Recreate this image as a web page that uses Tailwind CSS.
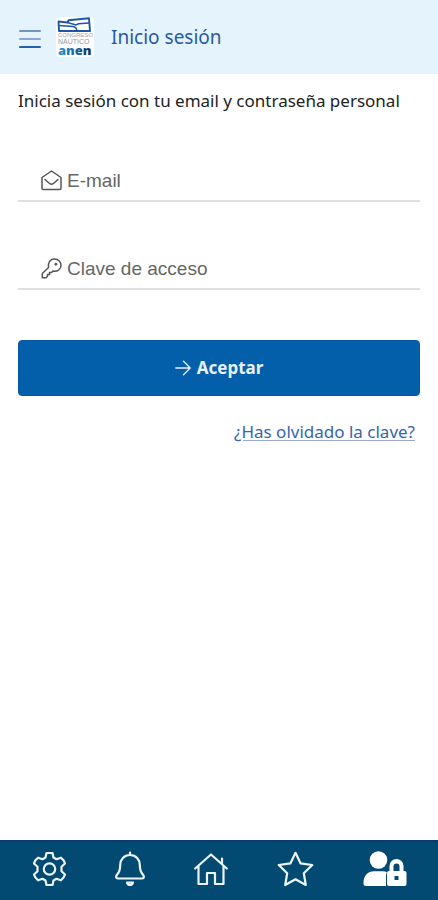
<!DOCTYPE html>
<html lang="es">
<head>
<meta charset="utf-8">
<meta name="viewport" content="width=device-width, initial-scale=1">
<title>Inicio sesión</title>
<script src="https://cdn.jsdelivr.net/npm/@tailwindcss/browser@4"></script>
</head>
<body class="flex min-h-screen flex-col bg-white font-['Noto_Sans','Open_Sans',sans-serif] text-[#222]">
  <header class="flex h-[74px] items-center bg-[#e5f4fc] pl-[18px]">
    <button type="button" aria-label="Menú" class="mt-1 flex h-6 w-6 flex-col justify-center gap-1.5 px-px">
      <span class="h-0.5 w-full rounded-full bg-[#7193c7]"></span>
      <span class="h-0.5 w-full rounded-full bg-[#8da6d0]"></span>
      <span class="h-0.5 w-full rounded-full bg-[#2460ad]"></span>
    </button>
    <svg class="ml-3.5 h-10 w-[38px]" viewBox="0 0 38 40" role="img" aria-label="Congreso Náutico ANEN">
      <defs>
        <linearGradient id="anen" x1="0" x2="1" y1="0" y2="0">
          <stop offset="0" stop-color="#2597ca"/>
          <stop offset=".5" stop-color="#176ca8"/>
          <stop offset="1" stop-color="#0d2c58"/>
        </linearGradient>
      </defs>
      <rect width="38" height="40" rx="4" fill="#fff"/>
      <path d="M2.500 4.500 11.500 5.500 12.500 3.300 33 1.300 34 14H3Z" fill="#fff" stroke="#1d56a5" stroke-width="1.900" stroke-linejoin="round"/>
      <path d="M2.800 8.500 17 9.500Q20.500 10 21 14M11.500 5.500 20 8 22.500 6.800 33 6" fill="none" stroke="#1d56a5" stroke-width="1.500"/>
      <text x="2" y="20" font-family="Liberation Sans" font-size="6" fill="#9b9fa6">CONGRESO</text>
      <text x="2" y="27" font-family="Liberation Sans" font-size="7" fill="#92969e">NÁUTICO</text>
      <text x="2" y="38" font-family="Open Sans" font-weight="800" font-size="13" fill="url(#anen)">anen</text>
    </svg>
    <h1 class="ml-[17px] text-[19px] leading-7 text-[#2859a4]">Inicio sesión</h1>
  </header>

  <main class="flex-1 px-[18px] pt-[15px]">
    <p class="text-[17px] leading-6 whitespace-nowrap">Inicia sesión con tu email y contraseña personal</p>
    <form class="flex flex-col">
      <label class="mt-9 flex h-[53px] items-center border-b-2 border-[#e0e0e0] pt-3 pl-[23px] text-[#555]">
        <svg class="h-[21px] w-[21px] shrink-0" viewBox="0 0 21 21" fill="none" stroke="currentColor" stroke-width="1.500" stroke-linejoin="round" stroke-linecap="round" aria-hidden="true">
          <path d="M1 7.500 10.500 1 20 7.500V18.200Q20 19.500 18.700 19.500H2.300Q1 19.500 1 18.200ZM4 9.500 8.800 13.700Q10.500 15 12.200 13.700L17 9.500"/>
        </svg>
        <input type="email" name="email" aria-label="E-mail" placeholder="E-mail" class="ml-[5px] min-w-0 flex-1 bg-transparent font-['Liberation_Sans',sans-serif] text-[19px] leading-6 outline-none placeholder:text-[#666]">
      </label>
      <label class="mt-[35px] flex h-[53px] items-center border-b-2 border-[#e0e0e0] pt-3 pl-[23px] text-[#555]">
        <svg class="h-[21px] w-[21px] shrink-0" viewBox="0 0 21 21" fill="none" stroke="currentColor" stroke-width="1.500" stroke-linejoin="round" stroke-linecap="round" aria-hidden="true">
          <path d="M7.500 9.500C6.500 5 9 1 13.500 1C17.500 1 20 4 20 7.300C20 11.500 16.200 14 12 13L10.500 14.500H8.500V16.500H6.500V18.200L5 19.700H1.300V15.500Z"/>
          <circle cx="14.800" cy="6.200" r="1" fill="currentColor" stroke-width="1"/>
        </svg>
        <input type="password" name="clave" aria-label="Clave de acceso" placeholder="Clave de acceso" class="ml-[5px] min-w-0 flex-1 bg-transparent font-['Liberation_Sans',sans-serif] text-[19px] leading-6 outline-none placeholder:text-[#666]">
      </label>
      <button type="submit" class="mt-[50px] flex h-14 items-center justify-center gap-1.5 rounded border border-[#0759a5] bg-[#045fab] text-[17px] font-bold text-[#e8f0fb]">
        <svg class="h-4 w-4" viewBox="0 0 16 16" fill="none" stroke="currentColor" stroke-width="1.300" stroke-linecap="round" stroke-linejoin="round" aria-hidden="true"><path d="M.8 8H15M8.500 1.300 15.200 8 8.500 14.700"/></svg>
        Aceptar
      </button>
    </form>
    <div class="mt-6 flex justify-end pr-[5px]">
      <a href="#" class="text-[17px] leading-6 text-[#3565ad] underline decoration-[#9aa8d3] underline-offset-2">¿Has olvidado la clave?</a>
    </div>
  </main>

  <nav aria-label="Principal" class="flex h-15 items-center justify-between border-t-2 border-[#0c3a6b] bg-[#034a72] pr-[31px] pb-1 pl-[33px] text-[#edf5fc]">
    <a href="#" aria-label="Ajustes">
      <svg class="h-9 w-[33px]" viewBox="1.500 0 33 36" fill="none" stroke="currentColor" stroke-width="2.200" stroke-linejoin="round">
        <path d="M15 2H21L22 6.500 25 8.200 29.300 6.700Q32.500 9 33.500 12.500L30 15.700V20.300L33.500 23.500Q32.500 27 29.300 29.300L25 27.800 22 29.500 21 34H15L14 29.500 11 27.800 6.700 29.300Q3.500 27 2.500 23.500L6 20.300V15.700L2.500 12.500Q3.500 9 6.700 6.700L11 8.200 14 6.500Z"/>
        <circle cx="18" cy="18" r="5.700"/>
      </svg>
    </a>
    <a href="#" aria-label="Avisos">
      <svg class="h-9 w-[30px]" viewBox="1 0 30 36" fill="none" stroke="currentColor" stroke-width="2.200" stroke-linejoin="round" stroke-linecap="round">
        <path d="M16 1.500V4M16 4C10 4 6.200 8.500 6.200 14C6.200 20 5 21.500 3.200 23.500C1.500 25.500 2 27.500 3.800 27.500H28.200C30 27.500 30.500 25.500 28.800 23.500C27 21.500 25.800 20 25.800 14C25.800 8.500 22 4 16 4Z"/>
        <path d="M13 31.500Q14 34 16 34T19 31.500Z"/>
      </svg>
    </a>
    <a href="#" aria-label="Inicio">
      <svg class="h-9 w-[34px]" viewBox="1 0 34 36" fill="none" stroke="currentColor" stroke-width="2.200" stroke-linejoin="round" stroke-linecap="round">
        <path d="M2.200 17.500 18 3.500 33.800 17.500M5.500 15V33H14V22H22V33H30.500V15M29 12.500V7.500"/>
      </svg>
    </a>
    <a href="#" aria-label="Favoritos">
      <svg class="h-9 w-[37px]" viewBox="-.5 0 37 36" fill="none" stroke="currentColor" stroke-width="2.200" stroke-linejoin="round">
        <path d="M18 1.800 23 12.300 34.800 14 26.300 22.200 28.300 34 18 28.300 7.700 34 9.700 22.200 1.200 14 13 12.300Z"/>
      </svg>
    </a>
    <a href="#" aria-label="Acceso de usuario">
      <svg class="h-9 w-11" viewBox="0 0 44 36" fill="#fff">
        <circle cx="15.500" cy="9" r="8.800"/>
        <path d="M.5 32C.5 24.500 5 20.300 11 20.300H20Q22.500 20.300 24 21.500Q23 22.500 23 24V35H3Q.5 35 .5 32.500Z"/>
        <path fill-rule="evenodd" d="M26.500 20V15A6.500 6.500 0 0 1 40.500 15V20H41.500Q43.500 20 43.500 22V33Q43.500 35 41.500 35H26Q24 35 24 33V22Q24 20 26 20ZM30.500 20H36.500V15.500A3 3 0 0 0 30.500 15.500ZM31.500 25V29H35.500V25Z"/>
      </svg>
    </a>
  </nav>
</body>
</html>
